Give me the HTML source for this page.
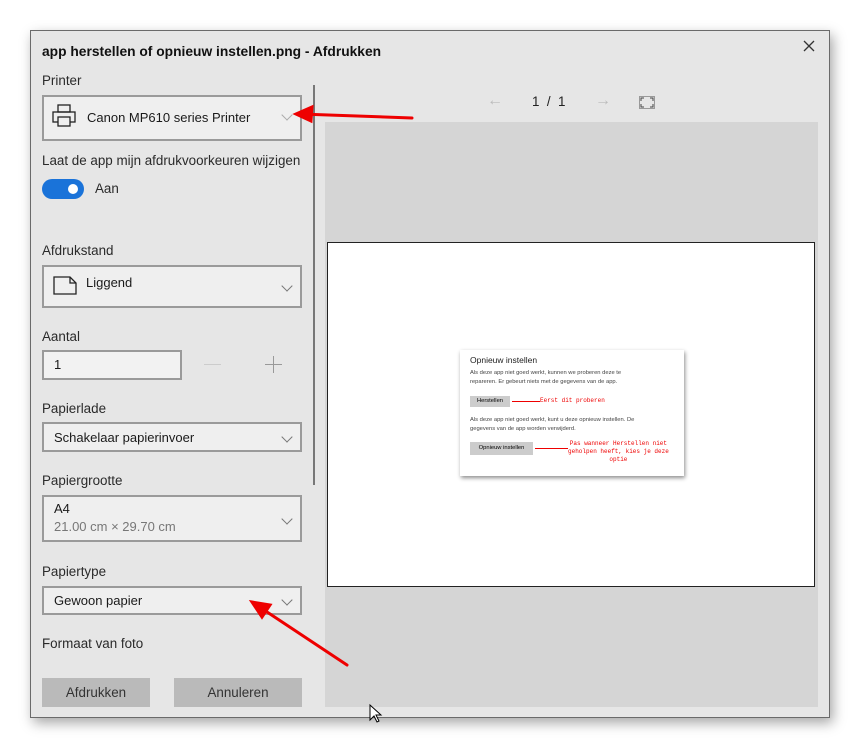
<!DOCTYPE html><html><head><style>
body{margin:0;width:861px;height:750px;background:#fff;position:relative;overflow:hidden;font-family:"Liberation Sans",sans-serif;}
.a{position:absolute}
.dlg{left:30px;top:30px;width:800px;height:688px;background:#e6e6e6;border:1px solid #6a6a6a;box-shadow:3px 5px 12px rgba(0,0,0,.35);box-sizing:border-box}
.lbl{font-size:13.4px;color:#2a2a2a}
.box{background:#efefef;border:2px solid #9a9a9a;box-sizing:border-box}
.txt{font-size:13px;color:#1a1a1a}
.chev{width:7px;height:7px;border-right:1px solid #777;border-bottom:1px solid #777;transform:rotate(45deg)}
.btn{background:#bababa;font-size:13.4px;color:#333;text-align:center;line-height:29px}
</style></head><body>
<div class="a dlg"></div>
<div class="a" style="left:42px;top:44px;font-size:13.8px;font-weight:bold;color:#111">app herstellen of opnieuw instellen.png - Afdrukken</div>
<svg class="a" style="left:803px;top:40px" width="12" height="12" stroke="#333" stroke-width="1.3"><path d="M1 1L11 11M11 1L1 11"/></svg>
<div class="a lbl" style="left:42px;top:73px">Printer</div>
<div class="a box" style="left:42px;top:95px;width:260px;height:46px"></div>
<svg class="a" style="left:52px;top:104px" width="24" height="24" viewBox="0 0 24 24" fill="none" stroke="#222" stroke-width="1.3"><rect x="6" y="1" width="12" height="7"/><rect x="1" y="8" width="22" height="10"/><rect x="6" y="13" width="12" height="9" fill="#efefef"/></svg>
<div class="a txt" style="left:87px;top:110px">Canon MP610 series Printer</div>
<div class="a chev" style="left:283px;top:111px;border-color:#aaa"></div>
<div class="a lbl" style="left:42px;top:153px">Laat de app mijn afdrukvoorkeuren wijzigen</div>
<div class="a" style="left:42px;top:179px;width:42px;height:20px;border-radius:10px;background:#1a73d9"></div>
<div class="a" style="left:68px;top:184px;width:10px;height:10px;border-radius:5px;background:#fff"></div>
<div class="a lbl" style="left:95px;top:181px">Aan</div>
<div class="a lbl" style="left:42px;top:243px">Afdrukstand</div>
<div class="a box" style="left:42px;top:265px;width:260px;height:43px"></div>
<svg class="a" style="left:53px;top:275px" width="24" height="20" viewBox="0 0 24 20" fill="none" stroke="#222" stroke-width="1.3"><path d="M1 2H17L23 8V19H1Z"/><path d="M17 2V8H23"/></svg>
<div class="a txt" style="left:86px;top:275px">Liggend</div>
<div class="a chev" style="left:283px;top:282px"></div>
<div class="a lbl" style="left:42px;top:329px">Aantal</div>
<div class="a box" style="left:42px;top:350px;width:140px;height:30px;background:#f2f2f2"></div>
<div class="a txt" style="left:54px;top:357px">1</div>
<div class="a" style="left:204px;top:364px;width:17px;height:1px;background:#ccc"></div>
<div class="a" style="left:265px;top:364px;width:17px;height:1px;background:#999"></div>
<div class="a" style="left:273px;top:356px;width:1px;height:17px;background:#999"></div>
<div class="a lbl" style="left:42px;top:401px">Papierlade</div>
<div class="a box" style="left:42px;top:422px;width:260px;height:30px"></div>
<div class="a txt" style="left:54px;top:430px">Schakelaar papierinvoer</div>
<div class="a chev" style="left:283px;top:433px"></div>
<div class="a lbl" style="left:42px;top:473px">Papiergrootte</div>
<div class="a box" style="left:42px;top:495px;width:260px;height:47px"></div>
<div class="a txt" style="left:54px;top:501px">A4</div>
<div class="a txt" style="left:54px;top:519px;color:#777">21.00 cm × 29.70 cm</div>
<div class="a chev" style="left:283px;top:515px"></div>
<div class="a lbl" style="left:42px;top:564px">Papiertype</div>
<div class="a box" style="left:42px;top:586px;width:260px;height:29px"></div>
<div class="a txt" style="left:54px;top:593px">Gewoon papier</div>
<div class="a chev" style="left:283px;top:596px"></div>
<div class="a lbl" style="left:42px;top:636px">Formaat van foto</div>
<div class="a btn" style="left:42px;top:678px;width:108px;height:29px">Afdrukken</div>
<div class="a btn" style="left:174px;top:678px;width:128px;height:29px">Annuleren</div>
<div class="a" style="left:313px;top:85px;width:2px;height:400px;background:#777"></div>
<div class="a" style="left:487px;top:92px;font-size:16px;color:#bbb">←</div>
<div class="a" style="left:532px;top:94px;font-size:13.4px;color:#222">1 &nbsp;/ &nbsp;1</div>
<div class="a" style="left:595px;top:92px;font-size:16px;color:#bbb">→</div>
<svg class="a" style="left:639px;top:96px" width="16" height="13" viewBox="0 0 16 13" fill="none" stroke="#444"><path d="M2 5V2H5M11 2H14V5M14 8V11H11M5 11H2V8"/><rect x="0.5" y="0.5" width="15" height="12" stroke="#999"/></svg>
<div class="a" style="left:325px;top:122px;width:493px;height:585px;background:#d5d5d5"></div>
<div class="a" style="left:327px;top:242px;width:488px;height:345px;background:#fff;border:1px solid #222;box-sizing:border-box"></div>
<div class="a" style="left:460px;top:350px;width:224px;height:126px;background:#fff;box-shadow:1px 2px 4px rgba(0,0,0,.45)"></div>
<div class="a" style="left:470px;top:355px;font-size:8.5px;color:#222">Opnieuw instellen</div>
<div class="a" style="left:470px;top:369px;font-size:5.8px;color:#444;line-height:9px">Als deze app niet goed werkt, kunnen we proberen deze te<br>repareren. Er gebeurt niets met de gegevens van de app.</div>
<div class="a" style="left:470px;top:396px;width:40px;height:11px;background:#ccc;font-size:5.8px;line-height:11px;text-align:center">Herstellen</div>
<div class="a" style="left:512px;top:401px;width:28px;height:1px;background:#e00"></div>
<div class="a" style="left:540px;top:397px;font-size:6px;color:#e00;font-family:'Liberation Mono',monospace">Eerst dit proberen</div>
<div class="a" style="left:470px;top:416px;font-size:5.8px;color:#444;line-height:9px">Als deze app niet goed werkt, kunt u deze opnieuw instellen. De<br>gegevens van de app worden verwijderd.</div>
<div class="a" style="left:470px;top:442px;width:63px;height:13px;background:#ccc;font-size:5.8px;line-height:13px;text-align:center">Opnieuw instellen</div>
<div class="a" style="left:535px;top:448px;width:33px;height:1px;background:#e00"></div>
<div class="a" style="left:568px;top:440px;font-size:6px;color:#e00;font-family:'Liberation Mono',monospace;text-align:center;line-height:8px">Pas wanneer Herstellen niet<br>geholpen heeft, kies je deze<br>optie</div>
<svg class="a" style="left:0;top:0" width="861" height="750"><g stroke="#e00" stroke-width="3" fill="#e00" stroke-linecap="round"><line x1="412" y1="118" x2="300" y2="114"/><path d="M296 114L312 107L311 121Z"/><line x1="347" y1="665" x2="258" y2="606"/><path d="M252 602L270 605L262 617Z"/></g>
<path d="M370 705V720L374 716L377 722L379 721L376 715H381Z" fill="#fff" stroke="#000"/></svg>
</body></html>
